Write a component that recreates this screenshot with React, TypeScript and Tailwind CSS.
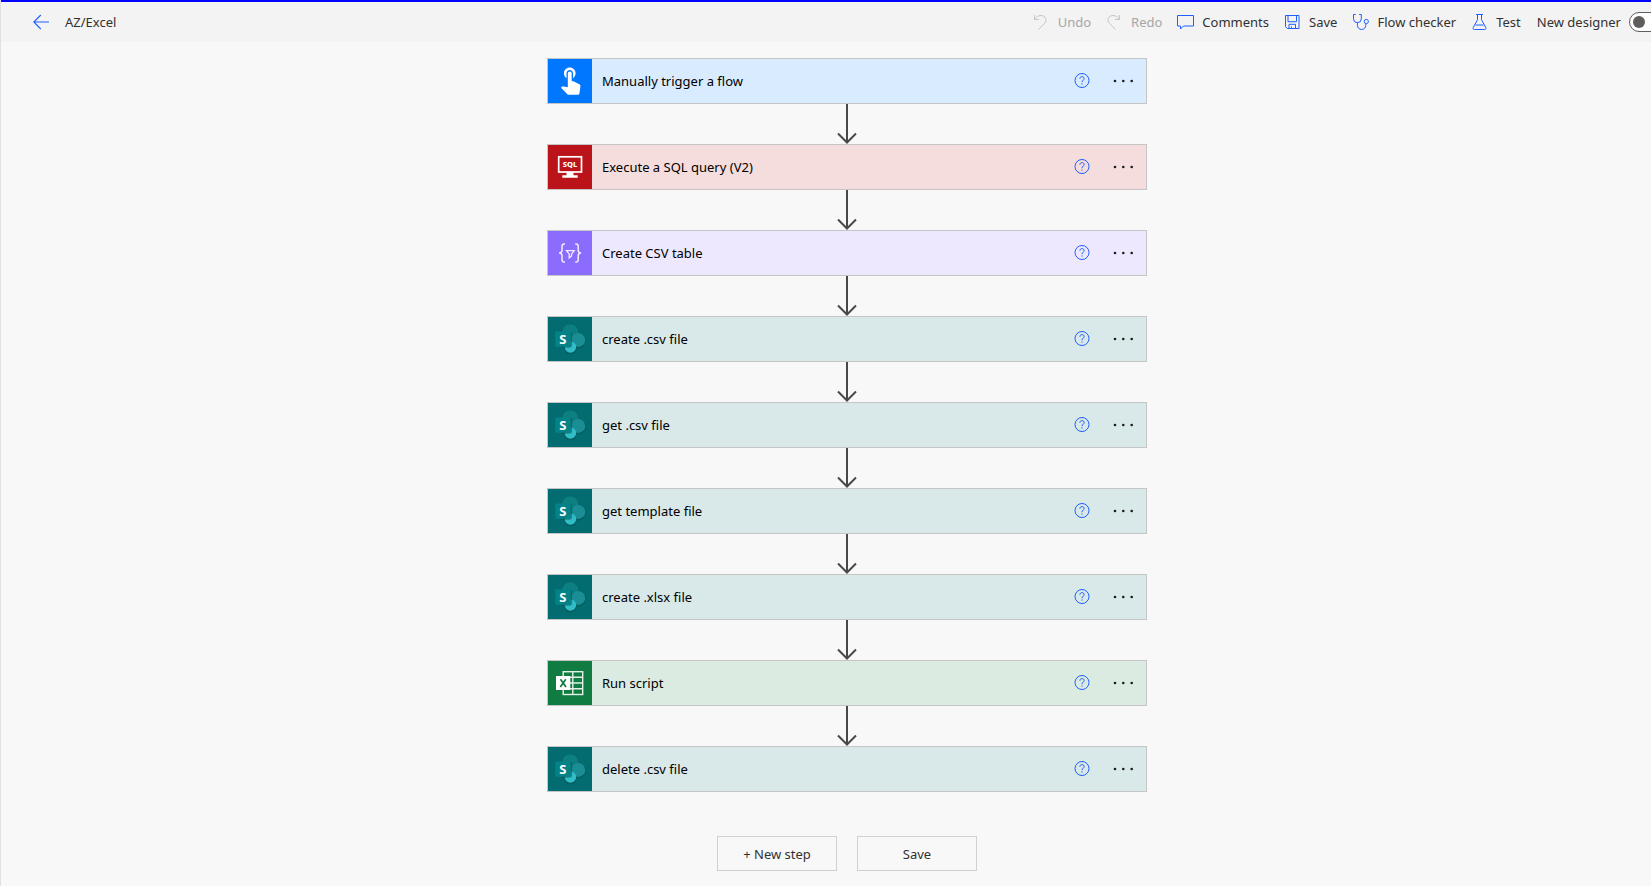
import type { ReactNode } from "react";

type Kind = "trigger" | "sql" | "data" | "sharepoint" | "excel";

const steps: { title: string; kind: Kind }[] = [
  { title: "Manually trigger a flow", kind: "trigger" },
  { title: "Execute a SQL query (V2)", kind: "sql" },
  { title: "Create CSV table", kind: "data" },
  { title: "create .csv file", kind: "sharepoint" },
  { title: "get .csv file", kind: "sharepoint" },
  { title: "get template file", kind: "sharepoint" },
  { title: "create .xlsx file", kind: "sharepoint" },
  { title: "Run script", kind: "excel" },
  { title: "delete .csv file", kind: "sharepoint" },
];

const cardColor: Record<Kind, string> = {
  trigger: "bg-[#d9ebff]",
  sql: "bg-[#f5dddd]",
  data: "bg-[#eee8ff]",
  sharepoint: "bg-[#d9e8e8]",
  excel: "bg-[#dbebe2]",
};

const tileColor: Record<Kind, string> = {
  trigger: "bg-[#0077ff]",
  sql: "bg-[#ba141a]",
  data: "bg-[#8c6cff]",
  sharepoint: "bg-[#036c70]",
  excel: "bg-[#107c41]",
};

const drawings: Record<Kind, ReactNode> = {
  trigger: (
    <path
      transform="translate(6.8 4.6) scale(1.3)"
      fill="#fff"
      d="M9 11.24V7.5C9 6.12 10.12 5 11.5 5S14 6.12 14 7.5v3.74c1.21-.81 2-2.18 2-3.74C16 5.01 13.99 3 11.5 3S7 5.01 7 7.5c0 1.56.79 2.93 2 3.74zm9.84 4.63l-4.54-2.26c-.17-.07-.35-.11-.54-.11H13v-6c0-.83-.67-1.5-1.5-1.5S10 6.67 10 7.5v10.74l-3.43-.72c-.08-.01-.15-.03-.24-.03-.31 0-.59.13-.79.33l-.79.8 4.94 4.94c.27.27.65.44 1.06.44h6.79c.75 0 1.33-.55 1.44-1.28l.75-5.27c.01-.07.02-.14.02-.2 0-.62-.38-1.16-.91-1.38z"
    />
  ),
  sql: (
    <>
      <rect x="10.7" y="11.8" width="22.8" height="15.2" fill="none" stroke="#fff" strokeWidth="1.7" />
      <path d="M18.5 27h7v3.2h4.2v2.6H14.3v-2.6h4.2z" fill="#fff" />
      <text x="22" y="22" textAnchor="middle" fontSize="7.5" fontWeight="800" fill="#fff">
        SQL
      </text>
    </>
  ),
  data: (
    <g fill="none" stroke="#f1edff" strokeWidth="1.5">
      <path d="M17 13h-.8c-1.6 0-2.2.9-2.2 2.3v3.9c0 1.6-.7 2.6-2.8 2.8 2.1.2 2.8 1.2 2.8 2.8v3.9c0 1.4.6 2.3 2.2 2.3h.8" />
      <path d="M27.200 13h.8c1.6 0 2.2.9 2.2 2.3v3.9c0 1.6.7 2.6 2.8 2.8-2.1.2-2.8 1.2-2.8 2.800v3.9c0 1.4-.6 2.3-2.2 2.3h-.8" />
      <path d="M18.500 19.600h7.700l-2.700 3.600v1.800l-2.300 1.800v-3.600z" strokeWidth="1.3" />
    </g>
  ),
  sharepoint: (
    <>
      <g fill="#013f42" opacity=".3">
        <circle cx="22.2" cy="16.5" r="9.2" />
        <circle cx="30.3" cy="23.6" r="7.8" />
        <circle cx="22.4" cy="30.8" r="6.5" />
      </g>
      <circle cx="22.2" cy="15.8" r="8.5" fill="#0b7f81" />
      <circle cx="30.3" cy="22.9" r="7" fill="#1a8e94" />
      <circle cx="22.4" cy="30" r="5.8" fill="#31bcc6" />
      <path d="M13 15.500h11.200v12.200a3 3 0 0 1-3 3H13z" fill="#024a4d" opacity=".45" />
      <rect x="7.300" y="14.400" width="15.400" height="15.400" rx=".8" fill="#038387" />
      <text x="14.900" y="26.600" textAnchor="middle" fontSize="13" fontWeight="700" fill="#fff">
        S
      </text>
    </>
  ),
  excel: (
    <>
      <g fill="none" stroke="#e3f1e8" strokeWidth="1.4">
        <rect x="15.2" y="10.7" width="19.5" height="22.8" />
        <path d="M24.800 10.700v22.800M15.200 16.200h19.500M15.200 22h19.500M15.200 27.800h19.500" />
      </g>
      <rect x="8" y="15" width="14.3" height="14" rx=".6" fill="#fff" />
      <path d="M12.500 18.300 18 26M17.800 18.300 12.300 26" stroke="#107c41" strokeWidth="1.7" />
    </>
  ),
};

function Glyph({ children, className = "text-[#1f5eff]" }: { children: ReactNode; className?: string }) {
  return (
    <svg
      viewBox="0 0 16 16"
      className={`size-4 shrink-0 overflow-visible ${className}`}
      fill="none"
      stroke="currentColor"
      strokeWidth="1"
      aria-hidden="true"
    >
      {children}
    </svg>
  );
}

function Tool({ label, disabled, children }: { label: string; disabled?: boolean; children: ReactNode }) {
  return (
    <button
      type="button"
      disabled={disabled}
      className={`flex items-center gap-2 whitespace-nowrap ${disabled ? "text-[#a6a6a6]" : "text-[#323130]"}`}
    >
      {children}
      {label}
    </button>
  );
}

function Header() {
  return (
    <header className="flex h-[42px] shrink-0 items-center border-t-2 border-[#0000ff] bg-[#f3f3f3] text-[#323130]">
      <a href="#back" aria-label="Back" className="ml-8 text-[#1f5eff]">
        <svg viewBox="0 0 16 16" className="size-4" fill="none" stroke="currentColor" aria-hidden="true">
          <path d="M16 8H.8M7.800 1 .8 8l7 7" strokeWidth="1.1" />
        </svg>
      </a>
      <h1 className="ml-4">AZ/Excel</h1>
      <div className="-mr-[18px] ml-auto flex items-center gap-4">
        <Tool label="Undo" disabled>
          <Glyph className="text-[#c8c6c4]">
            <path d="M.5 1v4.500H5M.7 5.300C2 3.200 4 1.500 7 1.500c3 0 5 1.900 5 4.500 0 1.500-.6 2.600-1.700 3.700L4.500 15.500" />
          </Glyph>
        </Tool>
        <Tool label="Redo" disabled>
          <Glyph className="text-[#c8c6c4]">
            <path d="M12.500 1v4.500H8M12.300 5.300C11 3.200 9 1.500 6 1.500c-3 0-5 1.900-5 4.500 0 1.500.6 2.600 1.700 3.700l5.800 5.800" />
          </Glyph>
        </Tool>
        <Tool label="Comments">
          <Glyph>
            <path d="M-.5 1.500h16v10.500H5.500L2.500 15v-3h-3z" />
          </Glyph>
        </Tool>
        <Tool label="Save">
          <Glyph>
            <path d="M.5 1.500H14v13H2.300L.5 12.700zM3 1.500v6.200h8.500V1.500M4 14.500v-4.200h6.500v4.200M6.500 14.500v-2" />
          </Glyph>
        </Tool>
        <Tool label="Flow checker">
          <Glyph>
            <path d="M2.800.5H.5v4.300a3.900 3.900 0 0 0 7.800 0V.5H6.200M4.400 8.700v2.600a4.200 4.200 0 0 0 8.400 0V9.700" />
            <circle cx="13.300" cy="7.500" r="2.100" />
          </Glyph>
        </Tool>
        <Tool label="Test">
          <Glyph>
            <path d="M4 .5h7M5.500.5v5.200L1.200 13.600c-.5 1 0 1.900 1.100 1.900h10.400c1.100 0 1.600-.9 1.100-1.900L9.500 5.700V.5M3.500 11h8" />
          </Glyph>
        </Tool>
        <label className="flex items-center gap-2 whitespace-nowrap">
          New designer
          <input type="checkbox" role="switch" className="peer sr-only" />
          <span className="flex h-5 w-10 items-center rounded-full border border-[#605e5c] bg-white px-[3px] peer-checked:justify-end">
            <span className="size-3 rounded-full bg-[#605e5c]" />
          </span>
        </label>
      </div>
    </header>
  );
}

function Connector() {
  return (
    <svg viewBox="0 0 24 40" className="h-10 w-6" fill="none" stroke="#484848" strokeWidth="2" aria-hidden="true">
      <path d="M12 0v38M3 29.500l9 9 9-9" />
    </svg>
  );
}

function StepCard({ title, kind }: { title: string; kind: Kind }) {
  return (
    <article className={`flex h-[46px] w-full items-center border border-[#c5c5c5] text-black ${cardColor[kind]}`}>
      <svg viewBox="0 0 44 44" className={`size-11 shrink-0 ${tileColor[kind]}`} aria-hidden="true">
        {drawings[kind]}
      </svg>
      <h2 className="ml-[10px] flex-1">{title}</h2>
      <button type="button" aria-label={`Help for ${title}`} className="text-[#1f5eff]">
        <svg viewBox="0 0 16 16" className="size-4" fill="none" stroke="currentColor" aria-hidden="true">
          <circle cx="8" cy="7.500" r="7" />
          <path d="M5.900 5.700c0-1.300.9-2.100 2.100-2.100s2.100.8 2.100 1.900c0 1.600-2.100 1.800-2.100 3.700M8 10.400v1.200" />
        </svg>
      </button>
      <button type="button" aria-label={`Menu for ${title}`} className="mr-3 ml-[22px] text-[#1b1b1b]">
        <svg viewBox="0 0 22 16" className="h-4 w-[22px]" fill="currentColor" aria-hidden="true">
          <circle cx="3" cy="8" r="1.300" />
          <circle cx="11.300" cy="8" r="1.300" />
          <circle cx="19.700" cy="8" r="1.300" />
        </svg>
      </button>
    </article>
  );
}

export default function App() {
  return (
    <div className="flex min-h-screen flex-col overflow-hidden border-l border-[#e1e1e1] bg-[#f8f8f8] font-['Noto_Sans','Open_Sans',sans-serif] text-[13px] leading-5">
      <Header />
      <main className="flex flex-col items-center pt-4 pb-3 pl-[42px]">
        <ol className="w-full max-w-[600px]">
          {steps.map((step, i) => (
            <li key={step.title} className="flex flex-col items-center">
              {i > 0 && <Connector />}
              <StepCard {...step} />
            </li>
          ))}
        </ol>
        <div className="mt-11 flex gap-5 text-[#323130]">
          <button type="button" className="h-[35px] w-[120px] border border-[#d0d0d0]">
            + New step
          </button>
          <button type="button" className="h-[35px] w-[120px] border border-[#d0d0d0]">
            Save
          </button>
        </div>
      </main>
    </div>
  );
}
